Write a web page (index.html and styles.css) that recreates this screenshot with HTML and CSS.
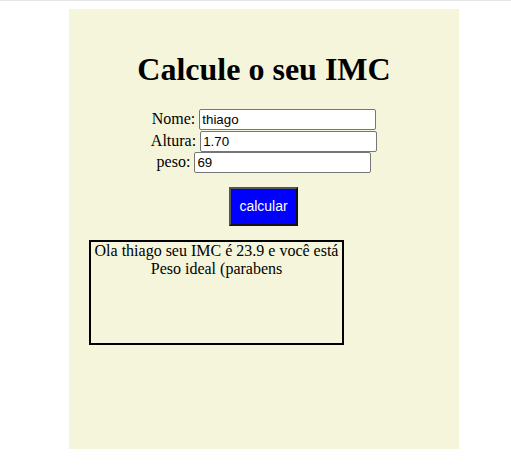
FILE: index.html
```html
<!DOCTYPE html>
<html lang="pt">
<head>
<meta charset="utf-8">
<title>Calcule o seu IMC</title>
<link rel="stylesheet" href="styles.css">
</head>
<body>
<div class="topline"></div>
<div class="container">
  <h1 class="title">Calcule o seu IMC</h1>
  <form class="form">
    <div class="row"><label class="label">Nome:</label> <input class="field" type="text" value="thiago"></div>
    <div class="row"><label class="label">Altura:</label> <input class="field" type="text" value="1.70"></div>
    <div class="row"><label class="label">peso:</label> <input class="field" type="text" value="69"></div>
    <div class="actions"><button class="btn" type="button">calcular</button></div>
  </form>
  <div class="result">Ola thiago seu IMC é 23.9 e você está Peso ideal (parabens</div>
</div>
</body>
</html>
```
FILE: styles.css
```css
html, body {
  margin: 0;
  padding: 0;
  background: #ffffff;
}
body {
  font-family: "Liberation Serif", "Times New Roman", serif;
  font-size: 16px;
  color: #000;
}
.topline {
  height: 1px;
  background: #e6e6e6;
}
.container {
  margin: 8px 0 0 69px;
  width: 390px;
  height: 440px;
  padding-top: 21px;
  box-sizing: border-box;
  background: #f5f5dc;
  text-align: center;
}
.title {
  font-size: 32px;
  font-weight: bold;
  margin: 21px 0 21px;
  line-height: 36px;
}
.form {
  margin: 0;
}
.row {
  height: 21.5px;
  line-height: 21px;
}
.label {
  font-size: 16px;
}
.field {
  width: 177px;
  height: 21px;
  box-sizing: border-box;
  font-family: "Liberation Sans", Arial, sans-serif;
  font-size: 13.333px;
  padding: 1px 2px;
  border: 1px solid #767676;
  border-radius: 2px;
  background: #fff;
  color: #000;
  vertical-align: baseline;
}
.actions {
  margin-top: 14px;
  display: flex;
  justify-content: center;
  padding-left: 0;
}
.btn {
  width: 69px;
  height: 39px;
  box-sizing: border-box;
  background: #0000ff;
  color: #ffffff;
  font-family: "Liberation Sans", Arial, sans-serif;
  font-size: 14px;
  border: 2px solid;
  border-color: #555555 #111111 #111111 #555555;
  padding: 0;
  margin-left: -1px;
}
.result {
  margin: 14px 0 0 20px;
  width: 255px;
  height: 105px;
  box-sizing: border-box;
  border: 2px solid #000;
  text-align: center;
  font-size: 16px;
  line-height: 18px;
  padding-top: 0;
}
```
